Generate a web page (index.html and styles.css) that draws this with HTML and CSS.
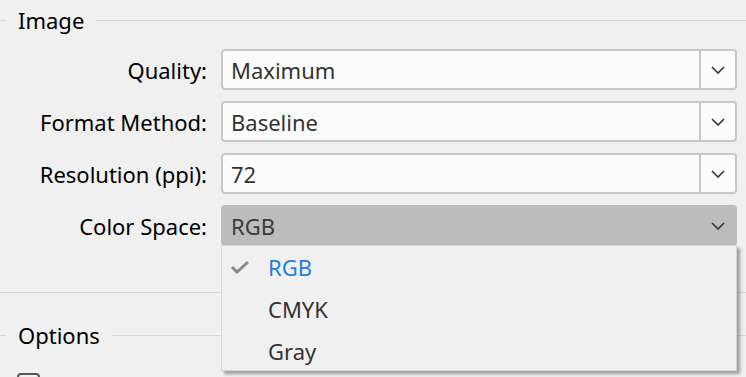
FILE: index.html
```html
<!DOCTYPE html>
<html lang="en">
<head>
    <meta charset="UTF-8">
    <meta name="viewport" content="width=device-width, initial-scale=1.0">
    <title>Export Settings</title>
    <link rel="stylesheet" href="styles.css">
</head>
<body>
    <div class="panel">
        <div class="group-title"><span>Image</span></div>

        <div class="form-grid">
            <label class="field-label">Quality:</label>
            <div class="combo">
                <span class="combo-value">Maximum</span>
                <span class="combo-btn">
                    <svg width="14" height="8" viewBox="0 0 14 8"><polyline points="1,1 7,7 13,1" /></svg>
                </span>
            </div>

            <label class="field-label">Format Method:</label>
            <div class="combo">
                <span class="combo-value">Baseline</span>
                <span class="combo-btn">
                    <svg width="14" height="8" viewBox="0 0 14 8"><polyline points="1,1 7,7 13,1" /></svg>
                </span>
            </div>

            <label class="field-label">Resolution (ppi):</label>
            <div class="combo">
                <span class="combo-value">72</span>
                <span class="combo-btn">
                    <svg width="14" height="8" viewBox="0 0 14 8"><polyline points="1,1 7,7 13,1" /></svg>
                </span>
            </div>

            <label class="field-label">Color Space:</label>
            <div class="combo combo-open">
                <span class="combo-value">RGB</span>
                <span class="combo-btn">
                    <svg width="14" height="8" viewBox="0 0 14 8"><polyline points="1,1 7,7 13,1" /></svg>
                </span>

                <!-- open dropdown list -->
                <ul class="combo-list">
                    <li class="selected">
                        <span class="check">
                            <svg width="20" height="14" viewBox="0 0 20 14"><polyline points="2,7 7,12 18,2" /></svg>
                        </span>
                        RGB
                    </li>
                    <li><span class="check"></span>CMYK</li>
                    <li><span class="check"></span>Gray</li>
                </ul>
            </div>
        </div>

        <div class="rule"></div>

        <div class="group-title options-title"><span>Options</span></div>
        <div class="check-row">
            <span class="checkbox"></span>
        </div>
    </div>
</body>
</html>
```

FILE: styles.css
```css
body {
    margin: 0;
    padding: 0;
    background-color: #f0f0f0;
    font-family: "Noto Sans", "Open Sans", sans-serif;
    font-size: 22px;
    color: #000;
    overflow: hidden;
}
.panel {
    height: 377px;
    padding-top: 4px;
    box-sizing: border-box;
    overflow: hidden;
}
.group-title {
    display: flex;
    align-items: center;
    line-height: 32px;
}
.group-title::before {
    content: "";
    width: 6px;
    height: 1px;
    background-color: #d8d8d8;
}
.group-title::after {
    content: "";
    flex: 1;
    height: 1px;
    background-color: #d8d8d8;
}
.group-title span {
    padding: 0 12px;
}
.form-grid {
    display: grid;
    grid-template-columns: 207px 516px;
    grid-auto-rows: 41px;
    column-gap: 14px;
    row-gap: 11px;
    padding-top: 13px;
}
.field-label {
    text-align: right;
    align-self: center;
}
.combo {
    position: relative;
    display: flex;
    align-items: stretch;
    border: 2px solid #c8c8c8;
    border-radius: 4px;
    background-color: #fcfcfc;
    color: #333;
    box-sizing: border-box;
}
.combo-value {
    flex: 1;
    display: flex;
    align-items: center;
    padding-left: 8px;
}
.combo-btn {
    width: 34px;
    border-left: 2px solid #c8c8c8;
    display: flex;
    align-items: center;
    justify-content: center;
}
.combo-btn polyline {
    fill: none;
    stroke: #333;
    stroke-width: 1.6;
}
.combo-open {
    background-color: #bcbcbc;
    border-color: #bcbcbc;
    color: #3a3a3a;
}
.combo-open .combo-btn {
    border-left-color: #bcbcbc;
}
.combo-list {
    position: absolute;
    top: 100%;
    left: -2px;
    right: -2px;
    height: 124px;
    margin: 1px 0 0;
    padding: 0;
    list-style: none;
    overflow: hidden;
    background-color: #f0f0f0;
    border: 1px solid #d6d6d6;
    box-shadow: 3px 3px 3px rgba(0, 0, 0, 0.35);
    z-index: 5;
}
.combo-list li {
    display: flex;
    align-items: center;
    height: 42px;
    color: #333;
}
.combo-list li.selected {
    color: #1f7fe3;
}
.check {
    width: 38px;
    display: flex;
    padding-left: 8px;
}
.check polyline {
    fill: none;
    stroke: #8a8a8a;
    stroke-width: 3;
}
.rule {
    margin-top: 46px;
    height: 1px;
    background-color: #d8d8d8;
}
.options-title {
    margin-top: 26px;
}
.check-row {
    padding: 22px 0 0 17px;
}
.checkbox {
    display: block;
    width: 19px;
    height: 19px;
    border: 2px solid #555;
    border-radius: 4px;
}
```
